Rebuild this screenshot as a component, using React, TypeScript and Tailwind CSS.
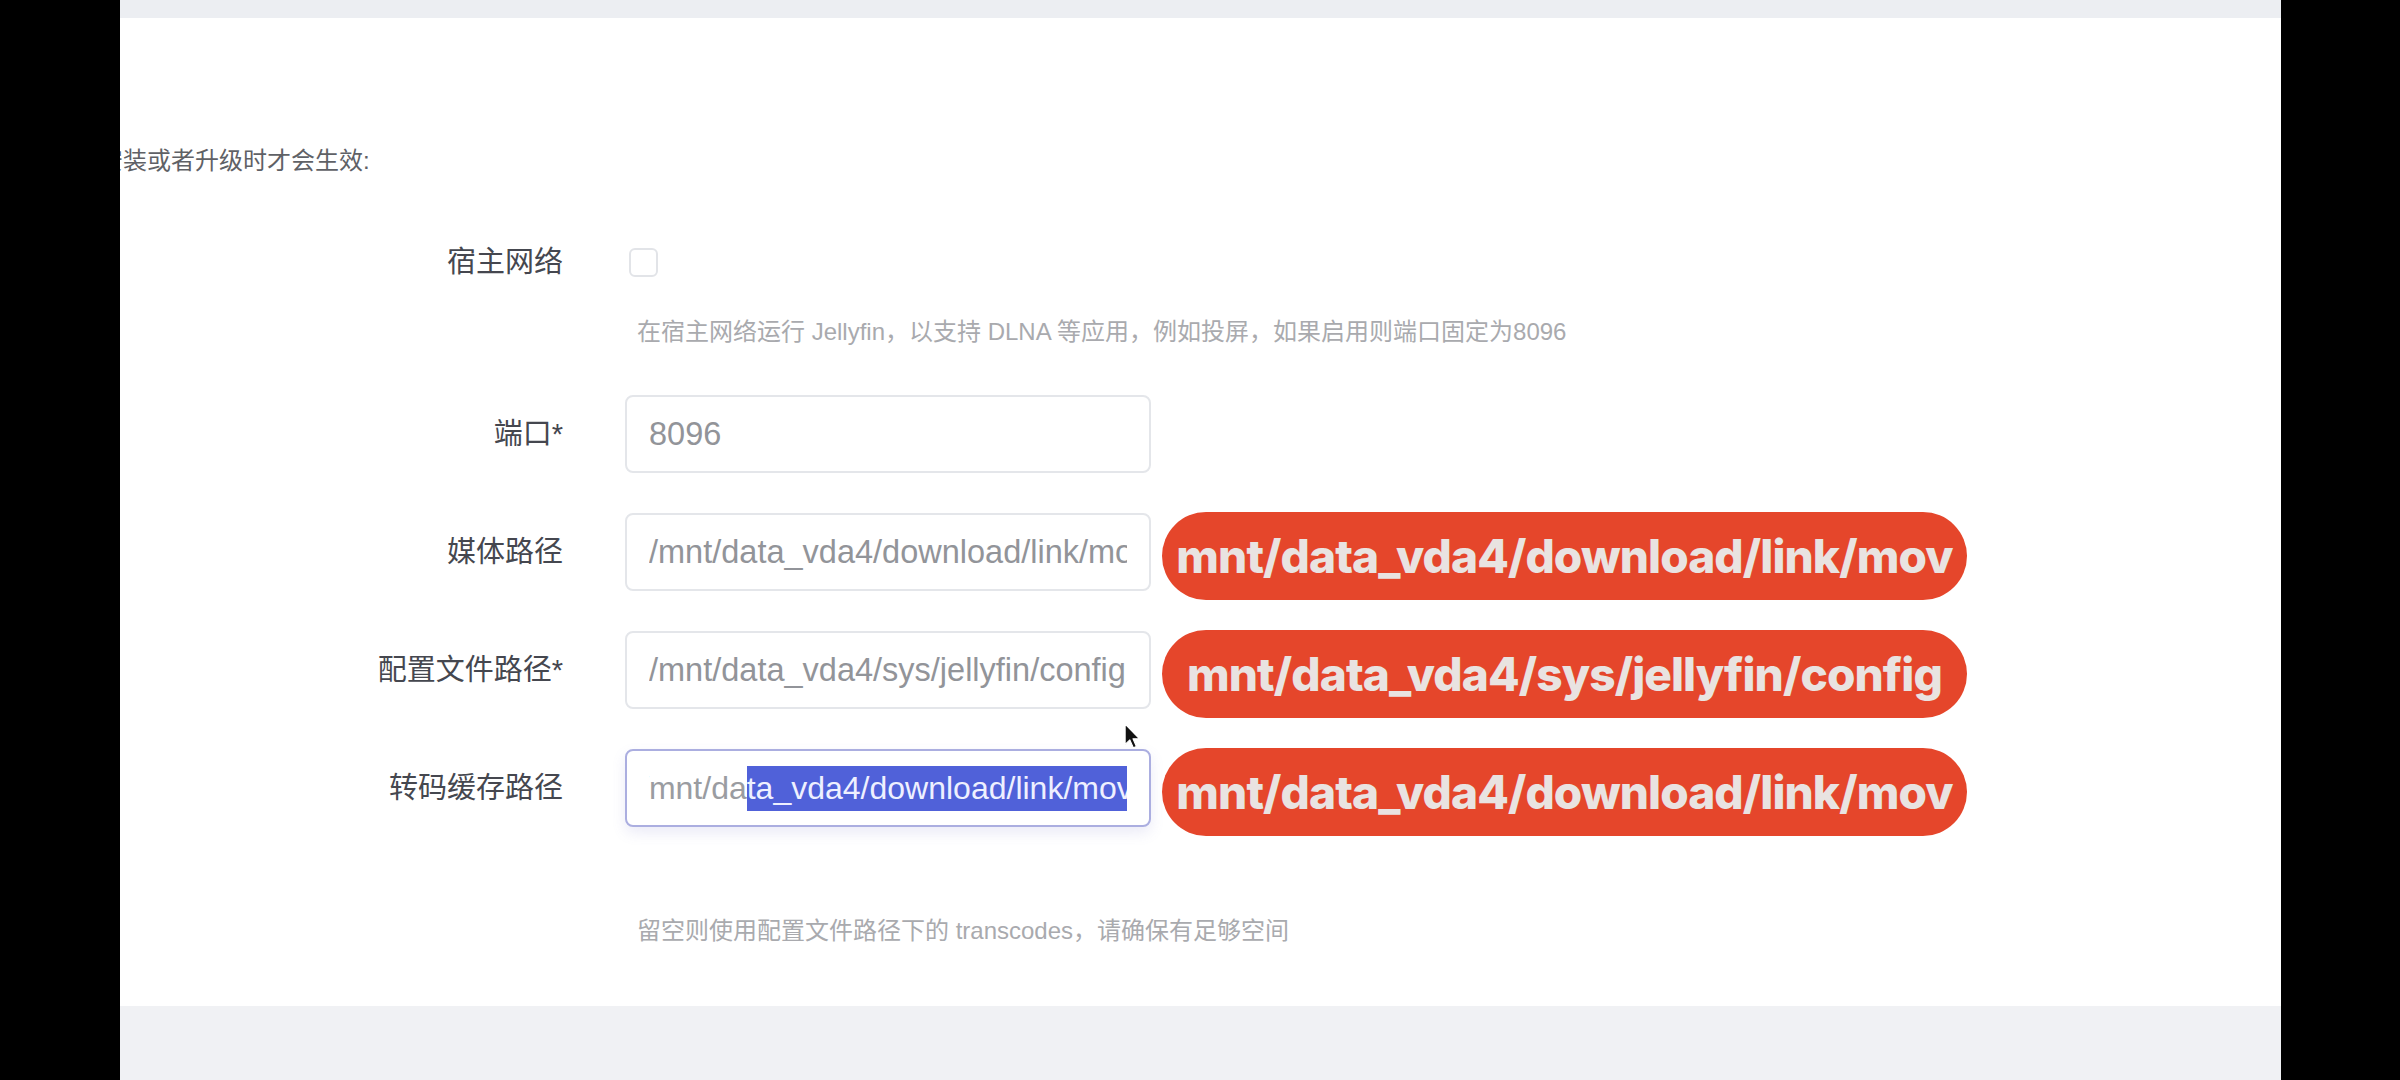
import React from "react";

const FONT = "font-['Liberation_Sans','Noto_Sans_CJK_SC',sans-serif]";

function Row({
  label,
  children,
  className,
}: {
  label: string;
  children: React.ReactNode;
  className: string;
}) {
  return (
    <div className={"flex items-center " + className}>
      <div className="w-[443px] shrink-0 whitespace-nowrap text-right text-[29px] leading-[40px] text-[#45474f]">
        {label}
      </div>
      <div className="ml-[62px] flex items-center">{children}</div>
    </div>
  );
}

function Field({ children, focused }: { children: React.ReactNode; focused?: boolean }) {
  return (
    <div
      className={
        focused
          ? "flex h-[78px] w-[526px] shrink-0 items-center rounded-[8px] border-2 border-[#abaee0] bg-white px-[22px] shadow-[0_6px_14px_rgba(110,115,200,0.14)]"
          : "flex h-[78px] w-[526px] shrink-0 items-center rounded-[8px] border-2 border-[#e4e6ea] bg-white px-[22px]"
      }
    >
      <div
        className={
          focused
            ? "w-full overflow-hidden whitespace-nowrap text-[32px] leading-[45px] text-[#929499]"
            : "w-full overflow-hidden whitespace-nowrap text-[32.5px] leading-[45px] text-[#929499]"
        }
      >
        {children}
      </div>
    </div>
  );
}

function Pill({ text }: { text: string }) {
  return (
    <div className="-mb-[9px] -mt-[1px] ml-[11px] flex h-[88px] w-[805px] shrink-0 items-center justify-center rounded-full bg-[#e5462b] font-['Inter',sans-serif] text-[46px] font-extrabold tracking-[-0.9px] text-[#e9e3e1]">
      {text}
    </div>
  );
}

export default function App() {
  return (
    <div className={"relative flex h-[1080px] w-[2400px] overflow-hidden bg-black " + FONT}>
      <div className="w-[120px] shrink-0 bg-black" />
      <div className="flex w-[2161px] shrink-0 flex-col">
        <div className="h-[18px] bg-[#eceef2]" />
        <div className="flex h-[988px] flex-col overflow-hidden bg-white pt-[125px]">
          <p className="-ml-[21px] whitespace-nowrap text-[24px] leading-[36px] text-[#5f6166]">
            安装或者升级时才会生效:
          </p>

          <Row label="宿主网络" className="mt-[63px]">
            <div className="ml-[4px] h-[29px] w-[29px] rounded-[6px] border-2 border-[#e2e4e8] bg-white" />
          </Row>

          <p className="ml-[517px] mt-[32px] whitespace-nowrap text-[24px] leading-[36px] text-[#a9aaae]">
            在宿主网络运行 Jellyfin，以支持 DLNA 等应用，例如投屏，如果启用则端口固定为8096
          </p>

          <Row label="端口*" className="mt-[45px]">
            <Field>8096</Field>
          </Row>

          <Row label="媒体路径" className="mt-[40px]">
            <Field>/mnt/data_vda4/download/link/movie</Field>
            <Pill text="mnt/data_vda4/download/link/mov" />
          </Row>

          <Row label="配置文件路径*" className="mt-[40px]">
            <Field>/mnt/data_vda4/sys/jellyfin/config</Field>
            <Pill text="mnt/data_vda4/sys/jellyfin/config" />
          </Row>

          <Row label="转码缓存路径" className="mt-[40px]">
            <Field focused>
              <span className="-ml-[9px] text-[#9a9ca1]">/mnt/da</span>
              <span className="inline-block bg-[#5061d9] leading-[45px] text-[#eef0ff]">
                ta_vda4/download/link/movie
              </span>
            </Field>
            <Pill text="mnt/data_vda4/download/link/mov" />
          </Row>

          <p className="ml-[517px] mt-[86px] whitespace-nowrap text-[24px] leading-[36px] text-[#a9aaae]">
            留空则使用配置文件路径下的 transcodes，请确保有足够空间
          </p>
        </div>
        <div className="flex-1 bg-[#f0f1f4]" />
      </div>
      <div className="flex-1 bg-black" />

      <svg
        className="absolute left-[1124px] top-[723px]"
        width="18"
        height="27"
        viewBox="0 0 16 24"
      >
        <path
          d="M1 1 L1 19 L5.2 15 L8.3 22 L11 20.8 L8 14 L13.8 14 Z"
          fill="#111"
          stroke="#fff"
          strokeWidth="1"
          strokeLinejoin="round"
        />
      </svg>
    </div>
  );
}
